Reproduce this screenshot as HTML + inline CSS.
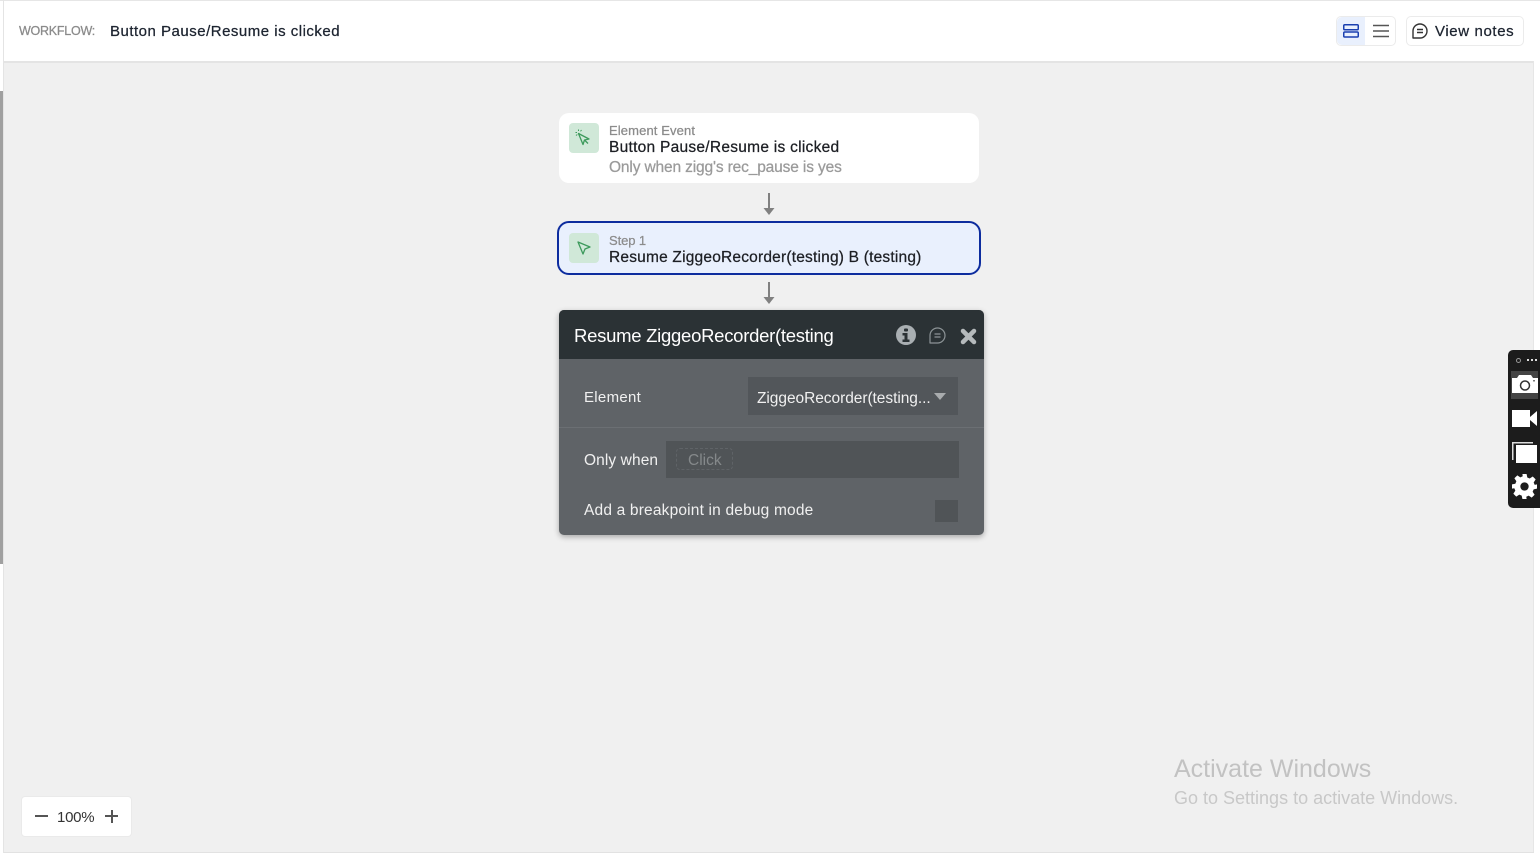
<!DOCTYPE html>
<html lang="en">
<head>
<meta charset="utf-8">
<title>Workflow</title>
<style>
html,body{margin:0;padding:0;width:1540px;height:857px;overflow:hidden;background:#fff}
body{position:relative;font-family:"Liberation Sans",sans-serif}
.a{position:absolute}
.t{position:absolute;white-space:nowrap;line-height:20px;height:20px}
.b{-webkit-text-stroke:.25px currentColor}
svg{position:absolute;display:block}
</style>
</head>
<body>
<div class="a" style="left:0;top:0;width:1540px;height:1px;background:#e6e6e6"></div>
<div class="a" style="left:3px;top:0;width:1px;height:853px;background:#e4e4e4"></div>
<div class="a" style="left:0;top:91px;width:3px;height:473px;background:#a0a0a0"></div>

<div class="a" style="left:4px;top:61px;width:1529px;height:2px;background:#e4e4e4"></div>
<div class="a" style="left:4px;top:63px;width:1529px;height:789px;background:#f0f0f0"></div>
<div class="a" style="left:1533px;top:61px;width:1px;height:792px;background:#e6e6e6"></div>
<div class="a" style="left:4px;top:852px;width:1530px;height:1px;background:#e2e2e2"></div>

<div class="t b" style="left:19px;top:21px;font-size:12.5px;color:#8a8a8a;letter-spacing:-.25px">WORKFLOW:</div>
<div class="t b" style="left:110px;top:22px;font-size:15px;color:#1d2430;letter-spacing:.5px">Button Pause/Resume is clicked</div>

<div class="a" style="left:1336px;top:16px;width:58px;height:28px;border:1px solid #ebebeb;border-radius:5px;background:#fff"></div>
<div class="a" style="left:1337px;top:17px;width:28px;height:28px;background:#e9f0fd;border-radius:5px 0 0 5px"></div>
<svg style="left:1343px;top:24px" width="16" height="14" viewBox="0 0 16 14" fill="none" stroke="#1a3fb0" stroke-width="1.5"><rect x=".75" y=".75" width="14.5" height="5" rx="1"/><rect x=".75" y="8" width="14.5" height="5" rx="1"/></svg>
<svg style="left:1373px;top:24px" width="16" height="14" viewBox="0 0 16 14" fill="none" stroke="#555" stroke-width="1.5"><path d="M0 1.5h16M0 7h16M0 12.500h16"/></svg>

<div class="a" style="left:1406px;top:16px;width:116px;height:28px;border:1px solid #ebebeb;border-radius:5px;background:#fff"></div>
<svg style="left:1412px;top:23px" width="16" height="16" viewBox="0 0 16 16" fill="none" stroke="#333" stroke-width="1.4"><path d="M1 15V8a7 7 0 1 1 7 7z" stroke-linejoin="round"/><path d="M5 6.500h6M5 9.500h6"/></svg>
<div class="t b" style="left:1435px;top:22px;font-size:15px;color:#1d2430;letter-spacing:.62px">View notes</div>

<div class="a" style="left:559px;top:113px;width:420px;height:70px;background:#fff;border-radius:10px"></div>
<div class="a" style="left:569px;top:123px;width:30px;height:30px;background:#d0e8d8;border-radius:4px"></div>
<svg style="left:575px;top:129px" width="18" height="18" viewBox="0 0 18 18" fill="none" stroke="#3d9a5c" stroke-width="1.300"><path d="M3.500 4.500L14 10l-4.500 1L8 15.500zM9.500 11l3.500 3.500" stroke-linejoin="round"/><path d="M3.500 .5v1.500M.5 3.500H2M6.500 1L5.500 2.300M1 6.500l1.300-1" stroke-width="1"/></svg>
<div class="t b" style="left:609px;top:121px;font-size:13px;color:#8b8b8b;letter-spacing:.12px">Element Event</div>
<div class="t b" style="left:609px;top:138px;font-size:15.5px;color:#1d1f24;letter-spacing:.27px">Button Pause/Resume is clicked</div>
<div class="t b" style="left:609px;top:158px;font-size:15.500px;color:#9a9a9a;letter-spacing:-.14px">Only when zigg's rec_pause is yes</div>

<svg style="left:762px;top:192px" width="14" height="24" viewBox="0 0 14 24"><path d="M7 1v16" stroke="#808080" stroke-width="2"/><path d="M1.500 16h11L7 23z" fill="#808080"/></svg>

<div class="a" style="left:557px;top:221px;width:420px;height:50px;background:#e9f0fd;border:2px solid #0d2c9e;border-radius:12px"></div>
<div class="a" style="left:569px;top:233px;width:30px;height:30px;background:#d0e8d8;border-radius:4px"></div>
<svg style="left:576px;top:240px" width="16" height="16" viewBox="0 0 16 16" fill="none" stroke="#3d9a5c" stroke-width="1.300" stroke-linejoin="round"><path d="M2 2l12 5-5 2-2 5z"/></svg>
<div class="t b" style="left:609px;top:231px;font-size:13px;color:#8b8b8b;letter-spacing:-.1px">Step 1</div>
<div class="t b" style="left:609px;top:248px;font-size:15.500px;color:#1d1f24;letter-spacing:.2px">Resume ZiggeoRecorder(testing) B (testing)</div>

<svg style="left:762px;top:281px" width="14" height="24" viewBox="0 0 14 24"><path d="M7 1v16" stroke="#808080" stroke-width="2"/><path d="M1.500 16h11L7 23z" fill="#808080"/></svg>

<div class="a" style="left:559px;top:310px;width:425px;height:225px;background:#5f6367;border-radius:5px;box-shadow:0 2px 6px rgba(0,0,0,.3);overflow:hidden">
  <div class="a" style="left:0;top:0;width:425px;height:49px;background:#2b3235"></div>
</div>
<div class="t" style="left:574px;top:326px;font-size:18.500px;color:#fff;letter-spacing:-.27px">Resume ZiggeoRecorder(testing</div>
<svg style="left:896px;top:325px" width="20" height="20" viewBox="0 0 20 20"><circle cx="10" cy="10" r="10" fill="#a9afb2"/><rect x="8" y="3.500" width="4" height="3" rx="1" fill="#2b3235"/><path d="M6.500 8h5v6.500h2V17h-7v-2.500h2V10.500h-2z" fill="#2b3235"/></svg>
<svg style="left:929px;top:327px" width="17" height="17" viewBox="0 0 17 17" fill="none" stroke="#8c9396" stroke-width="1.200"><path d="M1 16V8.500a7.500 7.500 0 1 1 7.500 7.500z" stroke-linejoin="round"/><path d="M5.500 7h6M5.500 10h6"/></svg>
<svg style="left:960px;top:328px" width="17" height="17" viewBox="0 0 17 17"><path d="M3 3l11 11M14 3L3 14" stroke="#b5babc" stroke-width="4.500" stroke-linecap="round"/></svg>

<div class="t" style="left:584px;top:388px;font-size:15px;color:#f0f0f0;letter-spacing:.3px">Element</div>
<div class="a" style="left:748px;top:377px;width:210px;height:38px;background:#52565a"></div>
<div class="t" style="left:757px;top:389px;font-size:15.500px;color:#f0f0f0;letter-spacing:-.05px">ZiggeoRecorder(testing...</div>
<svg style="left:934px;top:393px" width="12" height="7" viewBox="0 0 12 7"><path d="M0 0h12L6 7z" fill="#a9acae"/></svg>
<div class="a" style="left:559px;top:427px;width:425px;height:1px;background:#6b6f73"></div>

<div class="t" style="left:584px;top:451px;font-size:15.500px;color:#f0f0f0;letter-spacing:.1px">Only when</div>
<div class="a" style="left:666px;top:441px;width:293px;height:37px;background:#505457"></div>
<div class="a" style="left:676px;top:448px;width:55px;height:20px;border:1px dashed #5f6367;border-radius:4px"></div>
<div class="t" style="left:688px;top:451px;font-size:15.500px;color:#85898b;letter-spacing:0">Click</div>

<div class="t" style="left:584px;top:501px;font-size:15.500px;color:#f0f0f0;letter-spacing:.18px">Add a breakpoint in debug mode</div>
<div class="a" style="left:935px;top:500px;width:23px;height:22px;background:#505457"></div>

<div class="a" style="left:1508px;top:350px;width:32px;height:158px;background:#1c1c1c;border-radius:5px 0 0 5px"></div>
<div class="a" style="left:1516px;top:358px;width:3px;height:3px;border:1px solid #999;border-radius:50%"></div>
<div class="a" style="left:1527px;top:359px;width:2px;height:2px;background:#ddd"></div>
<div class="a" style="left:1531px;top:359px;width:2px;height:2px;background:#ddd"></div>
<div class="a" style="left:1535px;top:359px;width:2px;height:2px;background:#ddd"></div>
<div class="a" style="left:1511px;top:371px;width:27px;height:28px;background:#444"></div>
<svg style="left:1512px;top:375px" width="26" height="19" viewBox="0 0 26 19"><path d="M0 3h5l2-3h12l2 3h5v15H0z" fill="#fff"/><circle cx="13" cy="10.500" r="4.500" fill="none" stroke="#333" stroke-width="1.500"/><rect x="21" y="5" width="2" height="1.500" fill="#777"/></svg>
<svg style="left:1512px;top:410px" width="26" height="18" viewBox="0 0 26 18"><rect x="0" y="0" width="18" height="17" fill="#fff"/><path d="M18 7l7-6v15l-7-6z" fill="#fff"/></svg>
<svg style="left:1512px;top:442px" width="26" height="22" viewBox="0 0 26 22"><path d="M0 0h21v1.500H1.500V18H0z" fill="#ddd"/><rect x="4" y="3" width="21" height="18" fill="#fff"/></svg>
<svg style="left:1512px;top:474px" width="25" height="25" viewBox="0 0 24 24"><path fill="#fff" fill-rule="evenodd" d="M10 0h4l.7 3.300 2.300 1 2.900-1.900 2.800 2.800-1.900 2.900 1 2.300L24 10v4l-3.200.7-1 2.300 1.900 2.900-2.800 2.800-2.900-1.900-2.300 1L14 24h-4l-.7-3.200-2.300-1-2.900 1.900-2.800-2.800 1.900-2.900-1-2.300L0 14v-4l3.200-.7 1-2.300-1.900-2.900 2.800-2.800 2.900 1.900 2.300-1zM12 8a4 4 0 1 0 0 8 4 4 0 0 0 0-8z"/></svg>

<div class="a" style="left:21px;top:796px;width:109px;height:39px;background:#fff;border:1px solid #eaeaea;border-radius:4px"></div>
<div class="a" style="left:35px;top:815px;width:13px;height:2px;background:#555"></div>
<div class="t" style="left:57px;top:808px;font-size:15px;color:#333;letter-spacing:-.25px">100%</div>
<div class="a" style="left:105px;top:815px;width:13px;height:2px;background:#555"></div>
<div class="a" style="left:110.500px;top:810px;width:2px;height:13px;background:#555"></div>

<div class="t" style="left:1174px;top:754px;font-size:25px;line-height:30px;height:30px;color:#c2c2c2;letter-spacing:0">Activate Windows</div>
<div class="t" style="left:1174px;top:788px;font-size:18px;color:#c8c8c8;letter-spacing:0">Go to Settings to activate Windows.</div>
</body>
</html>
